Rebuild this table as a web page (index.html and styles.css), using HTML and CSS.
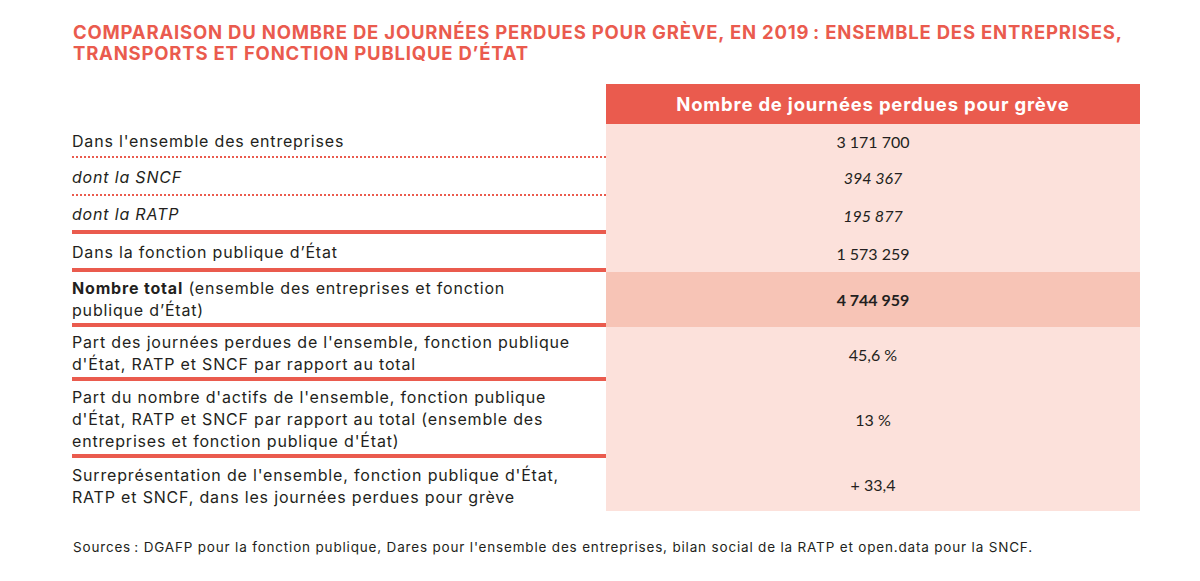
FILE: index.html
```html
<!DOCTYPE html>
<html lang="fr">
<head>
<meta charset="utf-8">
<title>Comparaison du nombre de journées perdues pour grève</title>
<link rel="stylesheet" href="styles.css">
</head>
<body>
<div class="page">
  <h1 class="title">Comparaison du nombre de journées perdues pour grève, en 2019&#8239;: ensemble des entreprises, transports et fonction publique d’État</h1>
  <div class="table">
    <div class="label head-empty"></div>
    <div class="value head">Nombre de journées perdues pour grève</div>

    <div class="label dotted">Dans l'ensemble des entreprises</div>
    <div class="value">3 171 700</div>

    <div class="label dotted italic">dont la SNCF</div>
    <div class="value italic">394 367</div>

    <div class="label solid italic">dont la RATP</div>
    <div class="value italic">195 877</div>

    <div class="label solid">Dans la fonction publique d’État</div>
    <div class="value">1 573 259</div>

    <div class="label solid"><span><b>Nombre total</b> (ensemble des entreprises et fonction<br>publique d’État)</span></div>
    <div class="value total">4 744 959</div>

    <div class="label solid"><span>Part des journées perdues de l'ensemble, fonction publique<br>d'État, RATP et SNCF par rapport au total</span></div>
    <div class="value">45,6 %</div>

    <div class="label solid"><span>Part du nombre d'actifs de l'ensemble, fonction publique<br>d'État, RATP et SNCF par rapport au total (ensemble des<br>entreprises et fonction publique d'État)</span></div>
    <div class="value">13 %</div>

    <div class="label"><span>Surreprésentation de l'ensemble, fonction publique d'État,<br>RATP et SNCF, dans les journées perdues pour grève</span></div>
    <div class="value">+ 33,4</div>
  </div>
  <p class="sources">Sources&#8239;: DGAFP pour la fonction publique, Dares pour l'ensemble des entreprises, bilan social de la RATP et open.data pour la SNCF.</p>
</div>
</body>
</html>
```
FILE: styles.css
```css
html, body {
  margin: 0;
  padding: 0;
  background: #ffffff;
}
body {
  font-family: Inter, "Liberation Sans", sans-serif;
  color: #231f20;
}
.page {
  width: 1068px;
  padding: 22px 0 0 72px;
}
.title {
  margin: 0 0 20px 1px;
  font-size: 18.5px;
  line-height: 21px;
  font-weight: 700;
  letter-spacing: 0.8px;
  text-transform: uppercase;
  color: #ea5b4e;
}
.table {
  display: grid;
  grid-template-columns: 534px 534px;
  grid-template-rows: 40px 34px 38px 38px 38px 55px 54px 77px 53px;
}
.label {
  display: flex;
  align-items: center;
  padding-top: 2px;
  font-size: 16px;
  line-height: 22px;
  letter-spacing: 0.82px;
}
.label.dotted {
  border-bottom: 2px dotted #ea5b4e;
}
.label.solid {
  border-bottom: 4px solid #ea5b4e;
}
.italic {
  font-style: italic;
}
.value {
  display: flex;
  align-items: center;
  justify-content: center;
  background: #fce1db;
  font-family: Lato, "Liberation Sans", sans-serif;
  font-size: 16px;
}
.value.head {
  background: #ea5b4e;
  color: #ffffff;
  font-family: Inter, "Liberation Sans", sans-serif;
  font-weight: 700;
  font-size: 18.5px;
  letter-spacing: 0.8px;
}
.value.total {
  background: #f7c4b6;
  font-weight: 700;
}
.sources {
  margin: 28px 0 0 1px;
  font-size: 13.5px;
  line-height: 16px;
  letter-spacing: 0.82px;
}
```
